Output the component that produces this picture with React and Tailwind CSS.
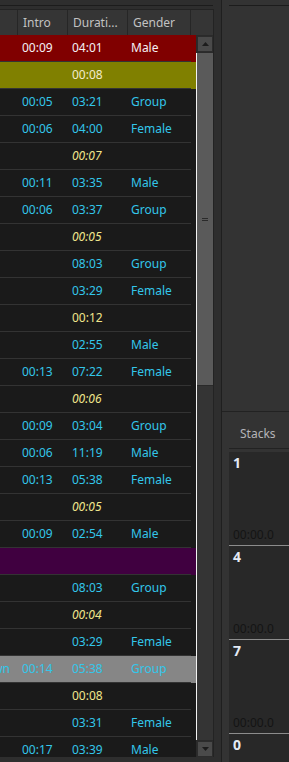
import React from 'react';

const CY = 'text-[#33c6ea]';
const YI = 'text-[#f0e68c] italic';
const YN = 'text-[#f0e68c]';

const rows = [
  { bg: 'bg-[#800000]', tc: 'text-[#f4f0f4]', intro: '00:09', dur: '04:01', g: 'Male' },
  { bg: 'bg-[#808000]', tc: 'text-[#f4eccc]', dur: '00:08' },
  { intro: '00:05', dur: '03:21', g: 'Group' },
  { intro: '00:06', dur: '04:00', g: 'Female' },
  { tc: YI, dur: '00:07' },
  { intro: '00:11', dur: '03:35', g: 'Male' },
  { intro: '00:06', dur: '03:37', g: 'Group' },
  { tc: YI, dur: '00:05' },
  { dur: '08:03', g: 'Group' },
  { dur: '03:29', g: 'Female' },
  { tc: YN, dur: '00:12' },
  { dur: '02:55', g: 'Male' },
  { intro: '00:13', dur: '07:22', g: 'Female' },
  { tc: YI, dur: '00:06' },
  { intro: '00:09', dur: '03:04', g: 'Group' },
  { intro: '00:06', dur: '11:19', g: 'Male' },
  { intro: '00:13', dur: '05:38', g: 'Female' },
  { tc: YI, dur: '00:05' },
  { intro: '00:09', dur: '02:54', g: 'Male' },
  { bg: 'bg-[#400040]' },
  { dur: '08:03', g: 'Group' },
  { tc: YI, dur: '00:04' },
  { dur: '03:29', g: 'Female' },
  { bg: 'bg-[#868686]', name: 'Unknown', intro: '00:14', dur: '05:38', g: 'Group' },
  { tc: YN, dur: '00:08' },
  { dur: '03:31', g: 'Female' },
  { intro: '00:17', dur: '03:39', g: 'Male' },
];

function Row({ r }) {
  const bg = r.bg || 'bg-[#1a1a1a]';
  const tc = r.tc || CY;
  return (
    <div className={`flex h-[27px] shrink-0 ${bg} ${tc}`}>
      <div className="w-[18px] border-b border-[#333] flex items-center justify-end overflow-hidden whitespace-nowrap pr-[8px]">
        {r.name && <span className="shrink-0">{r.name}</span>}
      </div>
      <div className="w-[50px] border-b border-[#333] flex items-center pl-[4px]">{r.intro}</div>
      <div className="w-[60px] border-b border-[#333] flex items-center pl-[4px]">{r.dur}</div>
      <div className="w-[63px] border-b border-[#333] flex items-center pl-[3px]">{r.g}</div>
      <div className="w-[5px]" />
    </div>
  );
}

function Cell({ n, last }) {
  if (last) {
    return (
      <div className="flex-1 bg-[#282828] pl-[4px] pt-[3px]">
        <div className="text-[14px] leading-[16px] font-bold text-[#e4eaf4]">{n}</div>
      </div>
    );
  }
  return (
    <div className="h-[94px] shrink-0 flex flex-col justify-between bg-[#282828] pl-[4px] pt-[3px] pb-[2px] border-b border-[#8c8c8c]">
      <div className="text-[14px] leading-[16px] font-bold text-[#e4eaf4]">{n}</div>
      <div className="text-[12px] leading-[16px] text-[#141414]">00:00.0</div>
    </div>
  );
}

export default function App() {
  return (
    <div className="flex w-[289px] h-[762px] overflow-hidden bg-[#2e2e2e] font-['Noto_Sans',sans-serif] text-[12px] leading-[16px]">
      {/* Left: table */}
      <div className="w-[214px] flex flex-col shrink-0">
        <div className="h-[5px] shrink-0" />
        <div className="h-px w-[213px] bg-[#1c1c1c] shrink-0" />
        <div className="h-[3px] shrink-0" />
        <div className="h-[748px] shrink-0 flex flex-col border-t border-r border-[#232323]">
          {/* header */}
          <div className="h-[25px] shrink-0 flex bg-[#353535] text-[#c2c2c2]">
            <div className="w-[18px] border-r border-[#262626]" />
            <div className="w-[50px] border-r border-[#262626] flex items-center pl-[5px]">Intro</div>
            <div className="w-[60px] border-r border-[#262626] flex items-center pl-[5px] whitespace-nowrap overflow-hidden">Durati...</div>
            <div className="w-[63px] border-r border-[#262626] flex items-center pl-[5px]">Gender</div>
            <div className="flex-1" />
          </div>
          {/* body */}
          <div className="h-[722px] flex overflow-hidden">
            <div className="w-[196px] flex flex-col bg-[#1a1a1a] overflow-hidden">
              {rows.map((r, i) => (
                <Row key={i} r={r} />
              ))}
            </div>
            <div className="w-[17px] flex flex-col bg-[#2a2a2a]">
              <div className="h-[18px] shrink-0 pl-px pt-px pb-px flex">
                <div className="flex-1 bg-[#4a4a4a] border border-[#2c2c2c] flex items-center justify-center">
                  <svg width="7" height="4" viewBox="0 0 7 4">
                    <path d="M0 4 L3.5 0 L7 4 Z" fill="#1c1c1c" />
                  </svg>
                </div>
              </div>
              <div className="h-[687px] shrink-0 border-l border-[#f2f2f2] bg-[#343434] flex flex-col">
                <div className="h-[333px] bg-[#5a5a5a] border-b border-[#2a2a2a] flex items-center justify-center">
                  <div className="w-[6px] h-[3px] border-y border-[#2a2a2a]" />
                </div>
              </div>
              <div className="h-[17px] shrink-0 pl-px pt-px flex">
                <div className="flex-1 bg-[#4a4a4a] border border-[#2c2c2c] flex items-center justify-center">
                  <svg width="7" height="4" viewBox="0 0 7 4">
                    <path d="M0 0 L3.5 4 L7 0 Z" fill="#1c1c1c" />
                  </svg>
                </div>
              </div>
            </div>
          </div>
        </div>
        <div className="flex-1" />
      </div>
      {/* splitter */}
      <div className="w-[7px] shrink-0 bg-[#2e2e2e]" />
      <div className="w-px shrink-0 bg-[#1f1f1f]" />
      {/* Right panel */}
      <div className="w-[67px] shrink-0 flex flex-col bg-[#333333]">
        <div className="h-[5px] shrink-0" />
        <div className="h-px ml-[7px] bg-[#1c1c1c] shrink-0" />
        <div className="h-[405px] shrink-0" />
        <div className="h-px bg-[#222222] shrink-0" />
        <div className="h-[36px] shrink-0 pl-[18px] pt-[14px] text-[#b4b4b8] whitespace-nowrap">Stacks</div>
        <div className="h-px ml-[7px] bg-[#222222] shrink-0" />
        <div className="h-[3px] shrink-0" />
        <div className="ml-[7px] flex-1 flex flex-col">
          <Cell n="1" />
          <Cell n="4" />
          <Cell n="7" />
          <Cell n="0" last />
        </div>
      </div>
    </div>
  );
}
